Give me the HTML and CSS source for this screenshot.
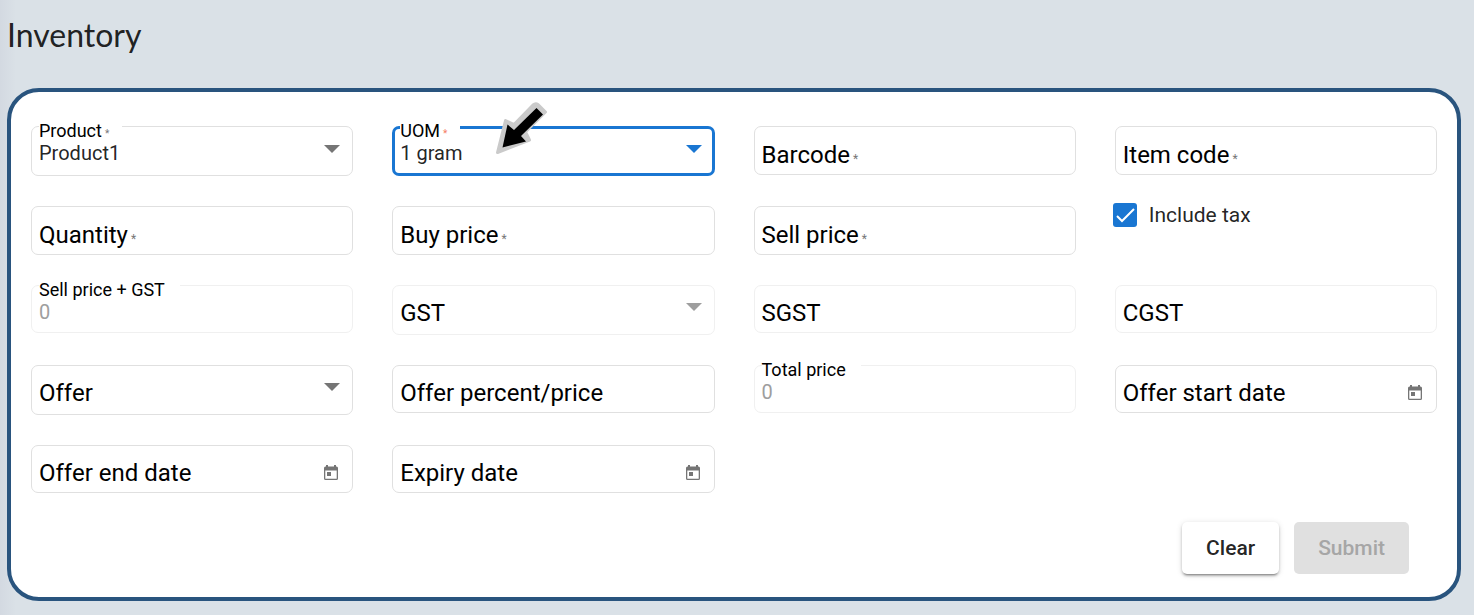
FILE: index.html
```html
<!DOCTYPE html>
<html lang="en">
<head>
<meta charset="utf-8">
<meta name="viewport" content="width=device-width, initial-scale=1">
<title>Inventory</title>
<link rel="stylesheet" href="styles.css">
</head>
<body class="page">
<svg class="sprite" aria-hidden="true">
  <symbol id="caret" viewBox="0 0 16 8"><path d="M0 0h16L8 8z" fill="currentColor"/></symbol>
  <symbol id="calendar" viewBox="0 0 14 16"><path fill="currentColor" fill-rule="evenodd" d="M2 0h2v1.500h6V0h2v1.500h.5Q14 1.500 14 3v10.500Q14 15 12.500 15h-11Q0 15 0 13.500V3Q0 1.500 1.500 1.500H2zM1.300 5.500v8.200h11.400V5.500zM3 7h4v4H3z"/></symbol>
</svg>
<h1 class="title">Inventory</h1>
<form class="card">
  <div class="grid">
    <div class="field field-select floating">
      <select class="control" id="product"><option>Product1</option></select>
      <label class="label" for="product">Product<span class="req">*</span></label>
      <svg class="caret"><use href="#caret"/></svg>
    </div>
    <div class="field field-select floating focused">
      <select class="control" id="uom"><option>1 gram</option></select>
      <label class="label" for="uom">UOM<span class="req">*</span></label>
      <svg class="caret"><use href="#caret"/></svg>
      <svg class="pointer" viewBox="0 0 52 52" aria-hidden="true">
        <path d="M42 2.500 49.500 10 29.500 30 33.500 38 1.500 50.500 9.500 18.500 18 22.500 37 3Q39.500 1 42 2.500z" fill="#cacaca" stroke="#cacaca" stroke-width="3" stroke-linejoin="round"/>
        <path d="M40.500 6 47 12.500 25 34 30 39.500 6.500 45.500 11.500 22.500 18 28z" fill="#000"/>
      </svg>
    </div>
    <div class="field required">
      <input class="control" id="barcode" type="text">
      <label class="label" for="barcode">Barcode<span class="req">*</span></label>
    </div>
    <div class="field required">
      <input class="control" id="item" type="text">
      <label class="label" for="item">Item code<span class="req">*</span></label>
    </div>
    <div class="field required">
      <input class="control" id="quantity" type="text">
      <label class="label" for="quantity">Quantity<span class="req">*</span></label>
    </div>
    <div class="field required">
      <input class="control" id="buy" type="text">
      <label class="label" for="buy">Buy price<span class="req">*</span></label>
    </div>
    <div class="field required">
      <input class="control" id="sell" type="text">
      <label class="label" for="sell">Sell price<span class="req">*</span></label>
    </div>
    <div class="check">
      <input class="checkbox" id="tax" type="checkbox" checked>
      <svg class="tick" viewBox="0 0 24 24" aria-hidden="true"><path d="M4 13l5 5L21 6" fill="none" stroke="#fff" stroke-width="2"/></svg>
      <label class="check-label" for="tax">Include tax</label>
    </div>
    <div class="field floating disabled">
      <input class="control" id="sellgst" type="text" value="0" disabled>
      <label class="label" for="sellgst">Sell price + GST</label>
    </div>
    <div class="field field-select disabled">
      <select class="control" id="gst" disabled><option></option></select>
      <label class="label" for="gst">GST</label>
      <svg class="caret"><use href="#caret"/></svg>
    </div>
    <div class="field disabled">
      <input class="control" id="sgst" type="text" disabled>
      <label class="label" for="sgst">SGST</label>
    </div>
    <div class="field disabled">
      <input class="control" id="cgst" type="text" disabled>
      <label class="label" for="cgst">CGST</label>
    </div>
    <div class="field field-select">
      <select class="control" id="offer"><option></option></select>
      <label class="label" for="offer">Offer</label>
      <svg class="caret"><use href="#caret"/></svg>
    </div>
    <div class="field">
      <input class="control" id="percent" type="text">
      <label class="label" for="percent">Offer percent/price</label>
    </div>
    <div class="field floating disabled">
      <input class="control" id="total" type="text" value="0" disabled>
      <label class="label" for="total">Total price</label>
    </div>
    <div class="field">
      <input class="control" id="start" type="text">
      <label class="label" for="start">Offer start date</label>
      <button class="date-button" type="button" aria-label="Choose offer start date"><svg class="calendar"><use href="#calendar"/></svg></button>
    </div>
    <div class="field">
      <input class="control" id="end" type="text">
      <label class="label" for="end">Offer end date</label>
      <button class="date-button" type="button" aria-label="Choose offer end date"><svg class="calendar"><use href="#calendar"/></svg></button>
    </div>
    <div class="field">
      <input class="control" id="expiry" type="text">
      <label class="label" for="expiry">Expiry date</label>
      <button class="date-button" type="button" aria-label="Choose expiry date"><svg class="calendar"><use href="#calendar"/></svg></button>
    </div>
  </div>
  <div class="actions">
    <button class="button button-clear" type="button">Clear</button>
    <button class="button button-submit" type="submit" disabled>Submit</button>
  </div>
</form>
</body>
</html>
```

FILE: styles.css
```css
* { box-sizing: border-box; }

.page {
  margin: 0;
  padding: 15px 13px 14px 7px;
  background: linear-gradient(90deg, #d3d9e1, #dae1e7 16px) #dae1e7;
  color: rgba(0, 0, 0, 0.87);
  font-family: Roboto, sans-serif;
}

.sprite { position: absolute; width: 0; height: 0; }

.title {
  margin: 0 0 33px;
  font: 400 32px/40px Lato, sans-serif;
}

.card {
  padding: 34px 20px 23px;
  border: 4px solid #29547e;
  border-radius: 32px;
  background: #fff;
}

.grid {
  display: grid;
  grid-template-columns: repeat(4, minmax(0, 1fr));
  gap: 30px 39px;
  align-items: start;
}

.field {
  position: relative;
  display: grid;
  align-items: center;
  min-height: 48px;
  border: 1px solid #e0e0e0;
  border-radius: 7px;
}

.field > * { grid-area: 1 / 1; }
.required { min-height: 49px; }
.field-select { min-height: 50px; }
.disabled { border-color: #f0f0f0; }

.focused {
  border: 3px solid #1976d2;
}

.control {
  width: 100%;
  height: 100%;
  margin: 0;
  padding: 4px 40px 0 7px;
  border: 0;
  outline: 0;
  background: transparent;
  color: rgba(0, 0, 0, 0.87);
  font: 400 20px/24px Roboto, sans-serif;
  appearance: none;
  opacity: 1;
}

.focused .control { padding-left: 5px; }
.disabled .control { padding-top: 5px; color: #9e9e9e; }

.label {
  justify-self: start;
  margin-left: 7px;
  padding-top: 8px;
  color: #000;
  font-size: 24px;
  line-height: 28px;
  pointer-events: none;
}

.field-select .label { padding-top: 6px; }

.floating .label,
.field-select.floating .label {
  position: absolute;
  top: -6px;
  left: 7px;
  margin: 0;
  padding: 0 15px 0 0;
  background: #fff;
  font-size: 18px;
  line-height: 20px;
}

.field-select.focused .label { top: -8px; left: 5px; }

.req {
  margin-left: 3px;
  color: #777;
  font-size: 12px;
  line-height: 1;
}

.floating .req { font-size: 10px; }
.floating.focused .req { color: #f57c60; }
.field-select.floating .label { padding-right: 13px; }

.caret {
  justify-self: end;
  width: 16px;
  height: 8px;
  margin: 0 12px 6px 0;
  color: #757575;
  pointer-events: none;
}

.floating .caret { margin-bottom: 4px; }
.focused .caret { margin-right: 10px; color: #1976d2; }
.disabled .caret { color: #9e9e9e; }

.pointer {
  position: absolute;
  top: -27px;
  left: 101px;
  width: 52px;
  height: 52px;
  pointer-events: none;
}

.date-button {
  display: grid;
  place-items: center;
  justify-self: end;
  width: 24px;
  height: 24px;
  margin: 7px 9px 0 0;
  padding: 0;
  border: 0;
  background: transparent;
  color: #757575;
}

.calendar { width: 14px; height: 16px; }

.check {
  display: grid;
  grid-template-columns: 24px auto;
  justify-content: start;
  align-items: center;
  gap: 12px;
  margin: -3px 0 0 -2px;
}

.checkbox {
  grid-area: 1 / 1;
  width: 24px;
  height: 24px;
  margin: 0;
  border-radius: 3px;
  background: #1976d2;
  appearance: none;
}

.tick {
  grid-area: 1 / 1;
  width: 24px;
  height: 24px;
  pointer-events: none;
}

.check-label { font-size: 21px; line-height: 24px; }

.actions {
  display: flex;
  justify-content: flex-end;
  gap: 15px;
  margin-top: 29px;
  padding-right: 28px;
}

.button {
  height: 52px;
  padding: 1px 24px 0;
  border: 0;
  border-radius: 5px;
  font: 500 21px/51px Roboto, sans-serif;
}

.button-clear {
  background: #fff;
  color: rgba(0, 0, 0, 0.87);
  box-shadow: 0 3px 2px -2px rgba(0, 0, 0, 0.3), 0 2px 3px rgba(0, 0, 0, 0.2), 0 1px 6px rgba(0, 0, 0, 0.12);
}

.button-submit { background: #e0e0e0; color: #a6a6a6; }
```
